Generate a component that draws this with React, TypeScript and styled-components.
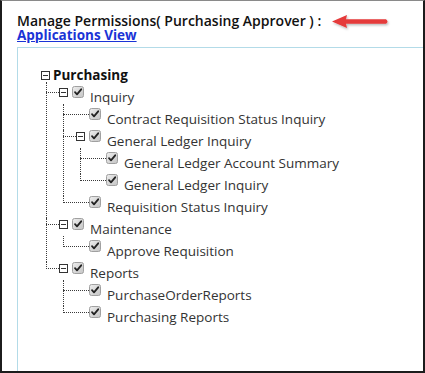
import React from "react";
import styled, { createGlobalStyle } from "styled-components";

const Global = createGlobalStyle`
  html, body { margin: 0; padding: 0; background: #fff; }
  body { font-family: "Open Sans", "Liberation Sans", sans-serif; }
  ul { list-style: none; margin: 0; padding: 0; }
`;

const Frame = styled.div`
  width: 425px;
  height: 373px;
  box-sizing: border-box;
  border-top: 1px solid #8a8a8a;
  border-left: 2px solid #1c1c1c;
  border-right: 2px solid #1c1c1c;
  border-bottom: 2px solid #1c1c1c;
  padding: 13px 0 0 15px;
  display: flex;
  flex-direction: column;
  overflow: hidden;
  background: #fff;
`;

const Title = styled.div`
  display: flex;
  align-items: center;
  gap: 10px;
  height: 14px;
  font-size: 14px;
  line-height: 14px;
  font-weight: 600;
  color: #111;
  white-space: nowrap;
`;

const Link = styled.a`
  display: block;
  font-size: 13.5px;
  line-height: 14px;
  font-weight: 700;
  color: #1a33d6;
  text-decoration: underline;
  cursor: pointer;
  width: max-content;
`;

const Panel = styled.div`
  flex: 1;
  margin-top: 5px;
  border-top: 1px solid #b3dbe8;
  border-left: 1px solid #b3dbe8;
  padding: 16px 0 0 23px;
`;

const Row = styled.div`
  display: flex;
  align-items: flex-start;
  height: 22px;
  white-space: nowrap;
`;

const Branch = styled.ul<{ $offset: number }>`
  margin-left: ${(p) => p.$offset}px;
`;

const Node = styled.li`
  position: relative;
  &::before {
    content: "";
    position: absolute;
    left: 0;
    top: 0;
    bottom: 0;
    border-left: 1px dotted #3a3a3a;
  }
  &:first-child::before {
    top: -4px;
  }
  &:last-child::before {
    bottom: auto;
    height: 7px;
  }
  &:first-child:last-child::before {
    height: 11px;
  }
`;

const Connector = styled.span<{ $leaf?: boolean }>`
  flex: none;
  width: ${(p) => (p.$leaf ? 26 : 13)}px;
  margin-top: 6px;
  border-top: 1px dotted #3a3a3a;
`;

const ExpanderBox = styled.svg<{ $root?: boolean }>`
  flex: none;
  width: 9px;
  height: 9px;
  margin-top: ${(p) => (p.$root ? 7 : 2)}px;
  margin-right: ${(p) => (p.$root ? 3 : 4)}px;
`;

const CheckBox = styled.svg`
  flex: none;
  width: 12px;
  height: 12px;
  margin-top: 0px;
  margin-right: 6px;
`;

const Label = styled.span<{ $root?: boolean }>`
  font-size: 13.5px;
  line-height: 22px;
  font-weight: ${(p) => (p.$root ? 700 : 400)};
  color: ${(p) => (p.$root ? "#111" : "#333")};
`;

const ArrowSvg = styled.svg`
  flex: none;
  margin-top: 3px;
`;

const Expander = ({ root }: { root?: boolean }) => (
  <ExpanderBox $root={root} viewBox="0 0 9 9">
    <rect x="0.5" y="0.5" width="8" height="8" fill="#fff" stroke="#333" />
    <line x1="2" y1="4.5" x2="7" y2="4.5" stroke="#333" strokeWidth="1" />
  </ExpanderBox>
);

const Check = () => (
  <CheckBox viewBox="0 0 12 12">
    <defs>
      <linearGradient id="cbg" x1="0" y1="0" x2="1" y2="1">
        <stop offset="0" stopColor="#eeeeee" />
        <stop offset="1" stopColor="#c4c4c4" />
      </linearGradient>
    </defs>
    <rect x="0.5" y="0.5" width="11" height="11" rx="2" fill="url(#cbg)" stroke="#a0a0a0" />
    <path d="M3 6.2 L5 8.3 L9.2 3.3" fill="none" stroke="#222" strokeWidth="1.8" strokeLinecap="round" strokeLinejoin="round" />
  </CheckBox>
);

const Arrow = () => (
  <ArrowSvg width="60" height="18" viewBox="0 0 60 18">
    <defs>
      <filter id="ash" x="-10%" y="-30%" width="125%" height="180%">
        <feDropShadow dx="1" dy="1.5" stdDeviation="1" floodColor="#000" floodOpacity="0.28" />
      </filter>
    </defs>
    <g filter="url(#ash)">
      <path d="M1 7.5 L16 1 L15 5.2 L55 5.2 Q58 7.5 55 9.8 L15 9.8 L16 14 Z" fill="#e53a3a" />
    </g>
  </ArrowSvg>
);

type TreeItem = { label: string; children?: TreeItem[] };

const tree: TreeItem[] = [
  {
    label: "Inquiry",
    children: [
      { label: "Contract Requisition Status Inquiry" },
      {
        label: "General Ledger Inquiry",
        children: [
          { label: "General Ledger Account Summary" },
          { label: "General Ledger Inquiry" },
        ],
      },
      { label: "Requisition Status Inquiry" },
    ],
  },
  { label: "Maintenance", children: [{ label: "Approve Requisition" }] },
  {
    label: "Reports",
    children: [{ label: "PurchaseOrderReports" }, { label: "Purchasing Reports" }],
  },
];

const TreeNode = ({ item }: { item: TreeItem }) => {
  const hasKids = !!item.children && item.children.length > 0;
  return (
    <Node>
      <Row>
        <Connector $leaf={!hasKids} />
        {hasKids && <Expander />}
        <Check />
        <Label>{item.label}</Label>
      </Row>
      {hasKids && (
        <Branch $offset={17}>
          {item.children!.map((c, i) => (
            <TreeNode key={i} item={c} />
          ))}
        </Branch>
      )}
    </Node>
  );
};

export default function App() {
  return (
    <>
      <Global />
      <Frame>
        <Title>
          <span>Manage Permissions( Purchasing Approver ) :</span>
          <Arrow />
        </Title>
        <Link>Applications View</Link>
        <Panel>
          <Row>
            <Expander root />
            <Label $root>Purchasing</Label>
          </Row>
          <Branch $offset={5}>
            {tree.map((c, i) => (
              <TreeNode key={i} item={c} />
            ))}
          </Branch>
        </Panel>
      </Frame>
    </>
  );
}
